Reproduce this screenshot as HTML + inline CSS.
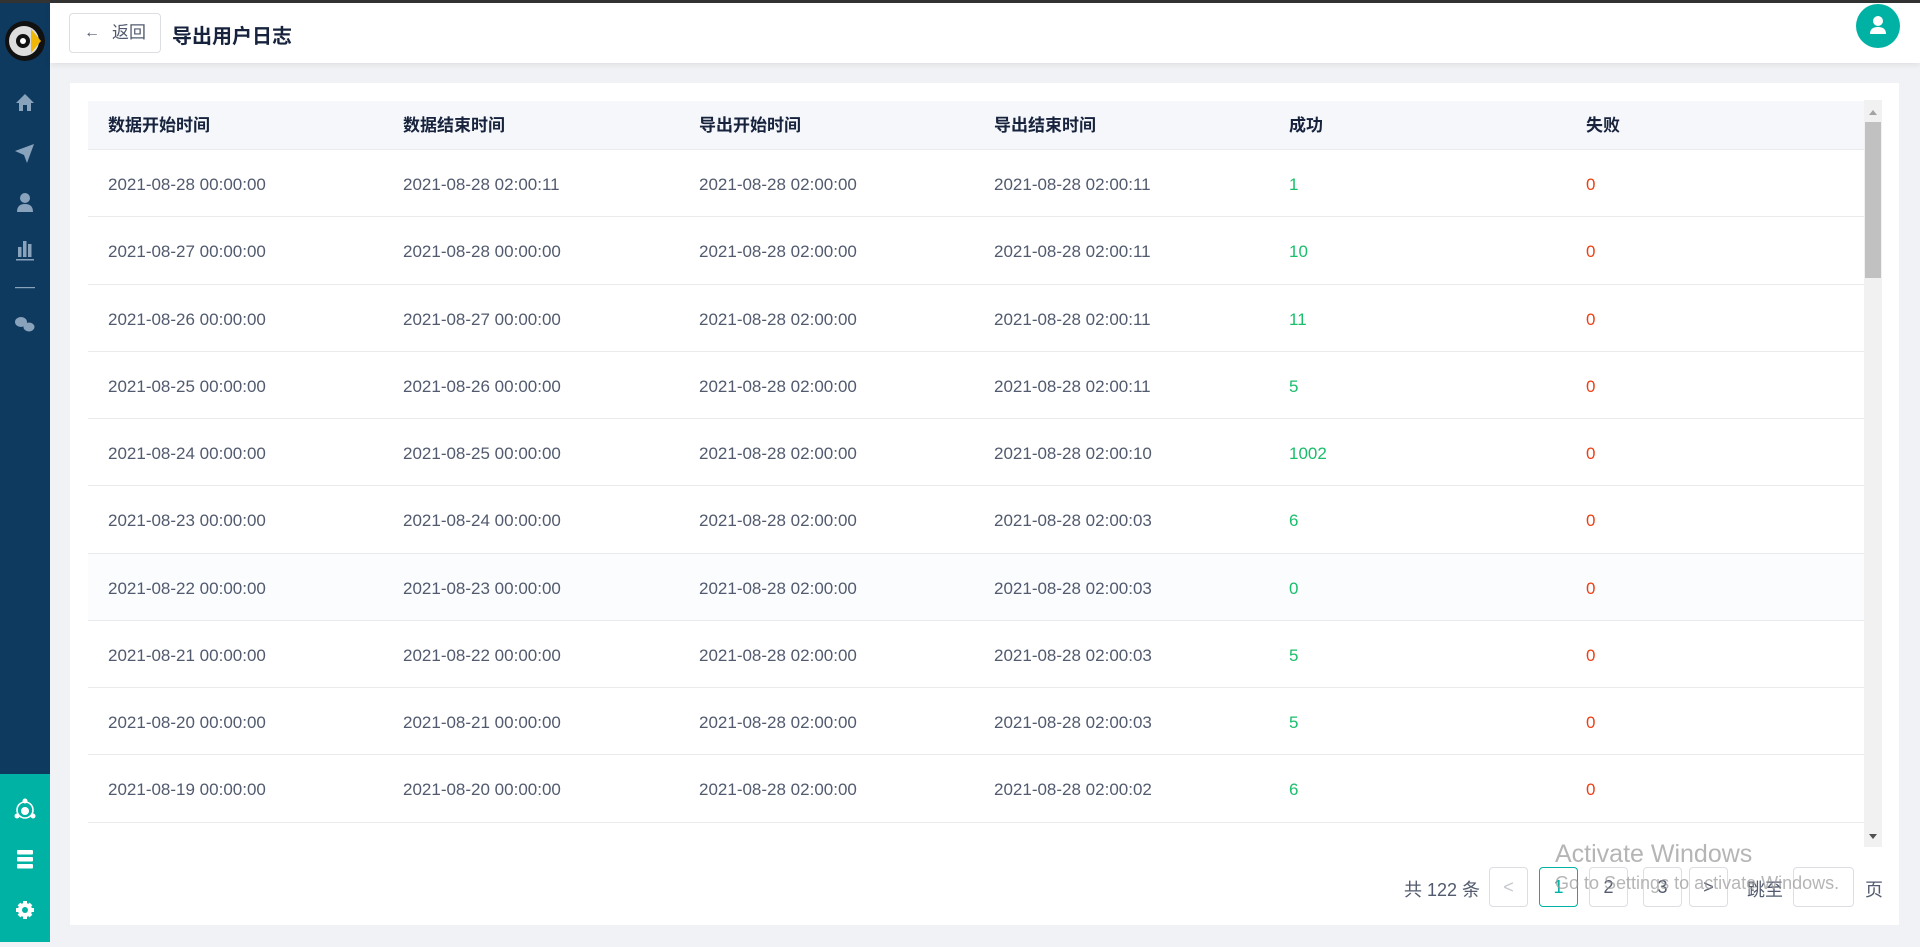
<!DOCTYPE html>
<html><head><meta charset="utf-8"><style>
*{box-sizing:border-box;margin:0;padding:0}
body{width:1920px;height:942px;overflow:hidden;background:#f0f2f5;font-family:"Liberation Sans","Noto Sans CJK SC",sans-serif;color:#515a6e;position:relative}
.topline{position:absolute;left:0;top:0;width:1920px;height:3px;background:#333}
.side{position:absolute;left:0;top:3px;width:50px;height:939px;background:#0f3a60}
.teal{position:absolute;left:0;top:774px;width:50px;height:168px;background:#00b2a3}
.top{position:absolute;left:50px;top:3px;width:1870px;height:60px;background:#fff;box-shadow:0 2px 6px rgba(0,0,0,.08)}
.back{position:absolute;left:69px;top:13px;width:92px;height:40px;border:1px solid #dcdee2;border-radius:4px;font-size:17px;color:#515a6e;line-height:38px;padding-left:42px;background:#fff}
.title{position:absolute;left:172px;top:20px;font-size:20px;font-weight:bold;color:#17233d}
.avatar{position:absolute;left:1856px;top:4px;width:44px;height:44px;border-radius:50%;background:#00b2a3}
.card{position:absolute;left:70px;top:83px;width:1829px;height:842px;background:#fff}
.tbl{position:absolute;left:88px;top:101px;width:1776px}
.row{position:relative;height:67.25px;border-bottom:1px solid #e8eaec;font-size:17px;line-height:70px}
.hd{height:49px;line-height:50px;background:#f5f7fa;font-weight:bold;color:#17233d}
.row span{position:absolute;top:0}
.c1{left:20px}.c2{left:315px}.c3{left:611px}.c4{left:906px}.c5{left:1201px}.c6{left:1498px}
.g{color:#19be6b}.r{color:#ed4014}
.sb{position:absolute;left:1864px;top:100px;width:18px;height:747px;background:#f1f1f1}
.thumb{position:absolute;left:1865px;top:122px;width:16px;height:156px;background:#c1c1c1}
.pg{position:absolute;top:867px;height:40px;border:1px solid #dcdee2;border-radius:4px;width:39px;text-align:center;line-height:38px;font-size:18px;color:#515a6e;background:#fff}
.t{position:absolute;top:876px;font-size:18px;color:#515a6e}
.wm{position:absolute;color:rgba(150,150,150,.7);font-family:"Liberation Sans",sans-serif}
</style></head><body>
<div class="topline"></div>
<div class="side">
<svg width="50" height="939" style="position:absolute;left:0;top:0">
<circle cx="25" cy="38" r="20" fill="#111"/><circle cx="24" cy="38" r="15" fill="#ddd"/><path d="M31 26 L41 38 L31 50Z" fill="#f2b705"/><circle cx="23" cy="38" r="7" fill="#111"/><circle cx="23" cy="38" r="3" fill="#fff"/>
<g fill="#8aa3bd">
<path d="M25 91 L16 100 H19 V108 H23 V102 H27 V108 H31 V100 H34Z"/>
<path d="M15 148 L34 141 L27 160 L24 152Z"/>
<circle cx="25" cy="195" r="5"/><path d="M17 209 Q17 201 25 201 Q33 201 33 209Z"/>
<rect x="18" y="244" width="3.5" height="10"/><rect x="23" y="238" width="3.5" height="16"/><rect x="28" y="241" width="3.5" height="13"/><rect x="16" y="256" width="18" height="1.5"/>
<rect x="15" y="284" width="20" height="1.2"/>
<ellipse cx="21" cy="319" rx="6" ry="5"/><ellipse cx="29" cy="324" rx="5.5" ry="4.5"/>
</g>
</svg>
</div>
<div class="teal"><svg width="50" height="168">
<g fill="#fff"><circle cx="25" cy="37" r="4"/><circle cx="25" cy="27" r="2.5"/><circle cx="17" cy="42" r="2.5"/><circle cx="33" cy="42" r="2.5"/><circle cx="25" cy="36" r="8" fill="none" stroke="#fff" stroke-width="1.6"/>
<rect x="17" y="76" width="16" height="4.5" rx="1"/><rect x="17" y="83" width="16" height="4.5" rx="1"/><rect x="17" y="90" width="16" height="4.5" rx="1"/>
<circle cx="25" cy="136" r="7"/><g stroke="#fff" stroke-width="4"><line x1="25" y1="127" x2="25" y2="145"/><line x1="16" y1="136" x2="34" y2="136"/><line x1="19" y1="130" x2="31" y2="142"/><line x1="31" y1="130" x2="19" y2="142"/></g><circle cx="25" cy="136" r="3" fill="#00b2a3"/></g>
</svg></div>
<div class="top"></div>
<div class="back"><span style="position:absolute;left:14px;top:0;font-size:16px">←</span>返回</div>
<div class="title">导出用户日志</div>
<div class="avatar"><svg width="44" height="44"><circle cx="22" cy="17" r="5" fill="#fff"/><path d="M14 30 Q14 23 22 23 Q30 23 30 30Z" fill="#fff"/></svg></div>
<div class="card"></div>
<div class="tbl">
<div class="row hd"><span class="c1">数据开始时间</span><span class="c2">数据结束时间</span><span class="c3">导出开始时间</span><span class="c4">导出结束时间</span><span class="c5">成功</span><span class="c6">失败</span></div>
<div class="row"><span class="c1">2021-08-28 00:00:00</span><span class="c2">2021-08-28 02:00:11</span><span class="c3">2021-08-28 02:00:00</span><span class="c4">2021-08-28 02:00:11</span><span class="c5 g">1</span><span class="c6 r">0</span></div>
<div class="row"><span class="c1">2021-08-27 00:00:00</span><span class="c2">2021-08-28 00:00:00</span><span class="c3">2021-08-28 02:00:00</span><span class="c4">2021-08-28 02:00:11</span><span class="c5 g">10</span><span class="c6 r">0</span></div>
<div class="row"><span class="c1">2021-08-26 00:00:00</span><span class="c2">2021-08-27 00:00:00</span><span class="c3">2021-08-28 02:00:00</span><span class="c4">2021-08-28 02:00:11</span><span class="c5 g">11</span><span class="c6 r">0</span></div>
<div class="row"><span class="c1">2021-08-25 00:00:00</span><span class="c2">2021-08-26 00:00:00</span><span class="c3">2021-08-28 02:00:00</span><span class="c4">2021-08-28 02:00:11</span><span class="c5 g">5</span><span class="c6 r">0</span></div>
<div class="row"><span class="c1">2021-08-24 00:00:00</span><span class="c2">2021-08-25 00:00:00</span><span class="c3">2021-08-28 02:00:00</span><span class="c4">2021-08-28 02:00:10</span><span class="c5 g">1002</span><span class="c6 r">0</span></div>
<div class="row"><span class="c1">2021-08-23 00:00:00</span><span class="c2">2021-08-24 00:00:00</span><span class="c3">2021-08-28 02:00:00</span><span class="c4">2021-08-28 02:00:03</span><span class="c5 g">6</span><span class="c6 r">0</span></div>
<div class="row" style="background:#fbfcfd"><span class="c1">2021-08-22 00:00:00</span><span class="c2">2021-08-23 00:00:00</span><span class="c3">2021-08-28 02:00:00</span><span class="c4">2021-08-28 02:00:03</span><span class="c5 g">0</span><span class="c6 r">0</span></div>
<div class="row"><span class="c1">2021-08-21 00:00:00</span><span class="c2">2021-08-22 00:00:00</span><span class="c3">2021-08-28 02:00:00</span><span class="c4">2021-08-28 02:00:03</span><span class="c5 g">5</span><span class="c6 r">0</span></div>
<div class="row"><span class="c1">2021-08-20 00:00:00</span><span class="c2">2021-08-21 00:00:00</span><span class="c3">2021-08-28 02:00:00</span><span class="c4">2021-08-28 02:00:03</span><span class="c5 g">5</span><span class="c6 r">0</span></div>
<div class="row"><span class="c1">2021-08-19 00:00:00</span><span class="c2">2021-08-20 00:00:00</span><span class="c3">2021-08-28 02:00:00</span><span class="c4">2021-08-28 02:00:02</span><span class="c5 g">6</span><span class="c6 r">0</span></div>
</div>
<div class="sb"></div><div class="thumb"></div>
<svg style="position:absolute;left:1864px;top:100px" width="18" height="747"><path d="M5 15 L13 15 L9 10Z" fill="#a3a3a3"/><path d="M5 734 L13 734 L9 739Z" fill="#505050"/></svg>
<div class="t" style="left:1404px">共 122 条</div>
<div class="pg" style="left:1489px;color:#c5c8ce">&lt;</div>
<div class="pg" style="left:1539px;border-color:#00b2a3;color:#00b2a3">1</div>
<div class="pg" style="left:1589px">2</div>
<div class="pg" style="left:1643px">3</div>
<div class="pg" style="left:1689px">&gt;</div>
<div class="t" style="left:1747px">跳至</div>
<div class="pg" style="left:1793px;width:61px"></div>
<div class="t" style="left:1865px">页</div>
<div class="wm" style="left:1555px;top:840px;font-size:25px">Activate Windows</div>
<div class="wm" style="left:1555px;top:873px;font-size:18px">Go to Settings to activate Windows.</div>
</body></html>
